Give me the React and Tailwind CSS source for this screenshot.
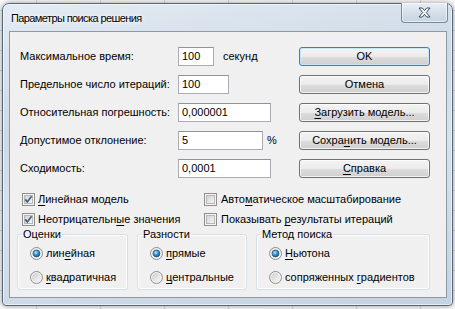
import React from 'react';

const FONT = "font-['Liberation_Sans',Arial,sans-serif]";

function Mn({ children }) {
  return <span className="underline underline-offset-[2px] decoration-[1px]">{children}</span>;
}

function CheckBox({ checked }) {
  return (
    <svg width="13" height="13" viewBox="0 0 13 13" className="shrink-0">
      <defs>
        <linearGradient id="cbg" x1="0" y1="0" x2="1" y2="1">
          <stop offset="0" stopColor="#d2d2d2" />
          <stop offset="1" stopColor="#f6f6f6" />
        </linearGradient>
      </defs>
      <rect x="0.5" y="0.5" width="12" height="12" fill="#f4f4f4" stroke="#8f8f8f" />
      <rect x="2.5" y="2.5" width="8" height="8" fill="url(#cbg)" stroke="#b7b7b7" />
      {checked && (
        <path d="M3.2 6.4 L5.3 8.9 L9.6 3.3" fill="none" stroke="#4a5f85" strokeWidth="1.7" />
      )}
    </svg>
  );
}

function Radio({ checked }) {
  return (
    <svg width="13" height="13" viewBox="0 0 13 13" className="shrink-0">
      <defs>
        <linearGradient id="rbg" x1="0" y1="0" x2="1" y2="1">
          <stop offset="0" stopColor="#cfcfcf" />
          <stop offset="1" stopColor="#f7f7f7" />
        </linearGradient>
        <radialGradient id="rdot" cx="0.4" cy="0.35" r="0.7">
          <stop offset="0" stopColor="#b8ecff" />
          <stop offset="0.45" stopColor="#3f9fd8" />
          <stop offset="1" stopColor="#0e4d87" />
        </radialGradient>
      </defs>
      <circle cx="6.5" cy="6.5" r="6" fill="#f2f2f2" stroke="#8f8f8f" />
      <circle cx="6.5" cy="6.5" r="4.5" fill="url(#rbg)" />
      {checked && <circle cx="6.5" cy="6.5" r="3.4" fill="url(#rdot)" stroke="#1b4f7e" strokeWidth="0.7" />}
    </svg>
  );
}

function Btn({ children, primary }) {
  return (
    <div
      className={`h-[19px] rounded-[3px] border flex items-center justify-center bg-[linear-gradient(to_bottom,#f4f4f4_0%,#ebebeb_50%,#dddddd_51%,#cfcfcf_100%)] ${
        primary
          ? 'border-[#3c7fb1] shadow-[inset_0_0_0_1px_#c4e8f8]'
          : 'border-[#707070] shadow-[inset_0_0_0_1px_rgba(255,255,255,0.75)]'
      }`}
    >
      {children}
    </div>
  );
}

function Input({ w, value }) {
  return (
    <div className={`${w} h-[19px] bg-white border border-[#abadb3] border-t-[#8e949d] flex items-center pl-[3px]`}>
      {value}
    </div>
  );
}

const ROWS = [
  { label: 'Максимальное время:', w: 'w-[36px]', value: '100', suffix: 'секунд', gap: 'ml-[9px]' },
  { label: 'Предельное число итераций:', w: 'w-[51px]', value: '100' },
  { label: 'Относительная погрешность:', w: 'w-[93px]', value: '0,000001' },
  { label: 'Допустимое отклонение:', w: 'w-[85px]', value: '5', suffix: '%', gap: 'ml-[4px]' },
  { label: 'Сходимость:', w: 'w-[93px]', value: '0,0001' },
];

function Group({ title, w, items }) {
  return (
    <fieldset className={`${w} border border-[#d5dfe5] rounded-[3px] shadow-[inset_0_0_0_1px_#ffffff] pb-[5px]`}>
      <legend className="ml-[4px] px-[1px] leading-[13px]">{title}</legend>
      <div className="flex flex-col gap-[11px] pt-[6px] pl-[12px]">
        {items.map((it, i) => (
          <div key={i} className="flex items-center h-[13px] gap-[3px] whitespace-nowrap">
            <Radio checked={i === 0} />
            <span>{it}</span>
          </div>
        ))}
      </div>
    </fieldset>
  );
}

export default function App() {
  return (
    <div
      className={`w-[455px] h-[309px] overflow-hidden bg-white pt-[3px] pl-[2px] ${FONT} text-[11px] leading-[13px] text-black bg-[linear-gradient(to_right,#dadcdd_1px,transparent_1px),linear-gradient(to_bottom,#dadcdd_1px,transparent_1px)] bg-[size:64px_20px] bg-[position:36px_10px]`}
    >
      <div className="w-[451px] h-[303px] rounded-t-[7px] rounded-b-[4px] border border-[#56677a] bg-[linear-gradient(170deg,#e4ebf3_0%,#cdd9e6_35%,#d8e2ed_55%,#c4d2e1_100%)] shadow-[0_0_6px_rgba(0,0,0,0.45),inset_0_0_0_1px_rgba(255,255,255,0.6)] flex flex-col pl-[6px] pr-[5px]">
        <div className="h-[27px] flex items-start justify-between shrink-0">
          <span className="pl-[2px] pt-[7px] text-[11px] tracking-[-0.6px] leading-[15px] [text-shadow:0_0_6px_#ffffff,0_0_3px_#ffffff]">
            Параметры поиска решения
          </span>
          <div className="-mt-[1px] mr-[-1px] w-[47px] h-[20px] rounded-b-[4px] border border-t-0 border-[#7a8899] bg-[linear-gradient(to_bottom,#e8eef5,#d4dfeb_50%,#c7d4e2)] shadow-[inset_0_0_0_1px_rgba(255,255,255,0.55)] flex items-center justify-center">
            <svg width="13" height="11" viewBox="0 0 13 11">
              <path
                d="M1 1 H4.3 L6.5 3.6 L8.7 1 H12 L8.3 5.5 L12 10 H8.7 L6.5 7.4 L4.3 10 H1 L4.7 5.5 Z"
                fill="#ffffff"
                stroke="#3d4a5a"
                strokeWidth="1"
                strokeLinejoin="round"
              />
            </svg>
          </div>
        </div>

        <div className="h-[267px] shrink-0 bg-[#f0f0f0] border border-[#8b99a8] flex flex-col">
          <div className="flex pt-[15px] pl-[10px]">
            <div className="w-[279px] flex flex-col gap-[9px]">
              {ROWS.map((r) => (
                <div key={r.label} className="flex items-center h-[19px] whitespace-nowrap">
                  <span className="w-[158px]">{r.label}</span>
                  <Input w={r.w} value={r.value} />
                  {r.suffix && <span className={r.gap}>{r.suffix}</span>}
                </div>
              ))}
            </div>
            <div className="w-[131px] flex flex-col gap-[9px]">
              <Btn primary>OK</Btn>
              <Btn>Отмена</Btn>
              <Btn>
                <Mn>З</Mn>агрузить модель...
              </Btn>
              <Btn>
                Сохра<Mn>н</Mn>ить модель...
              </Btn>
              <Btn>
                <Mn>С</Mn>правка
              </Btn>
            </div>
          </div>

          <div className="grid grid-cols-[182px_1fr] gap-y-[7px] mt-[15px] pl-[12px] whitespace-nowrap">
            <div className="flex items-center h-[13px] gap-[3px]">
              <CheckBox checked />
              <span>
                <Mn>Л</Mn>инейная модель
              </span>
            </div>
            <div className="flex items-center h-[13px] gap-[4px]">
              <CheckBox />
              <span>
                Авто<Mn>м</Mn>атическое масштабирование
              </span>
            </div>
            <div className="flex items-center h-[13px] gap-[3px]">
              <CheckBox checked />
              <span>
                Неотрицательн<Mn>ы</Mn>е значения
              </span>
            </div>
            <div className="flex items-center h-[13px] gap-[4px]">
              <CheckBox />
              <span>
                Показывать <Mn>р</Mn>езультаты итераций
              </span>
            </div>
          </div>

          <div className="flex gap-[9px] mt-[2px] pl-[7px]">
            <Group
              title="Оценки"
              w="w-[111px]"
              items={[
                <>лин<Mn>е</Mn>йная</>,
                <><Mn>к</Mn>вадратичная</>,
              ]}
            />
            <Group
              title="Разности"
              w="w-[110px]"
              items={[
                <><Mn>п</Mn>рямые</>,
                <><Mn>ц</Mn>ентральные</>,
              ]}
            />
            <Group
              title="Метод поиска"
              w="w-[174px]"
              items={[
                <><Mn>Н</Mn>ьютона</>,
                <>сопряженных <Mn>г</Mn>радиентов</>,
              ]}
            />
          </div>
        </div>
      </div>
    </div>
  );
}
